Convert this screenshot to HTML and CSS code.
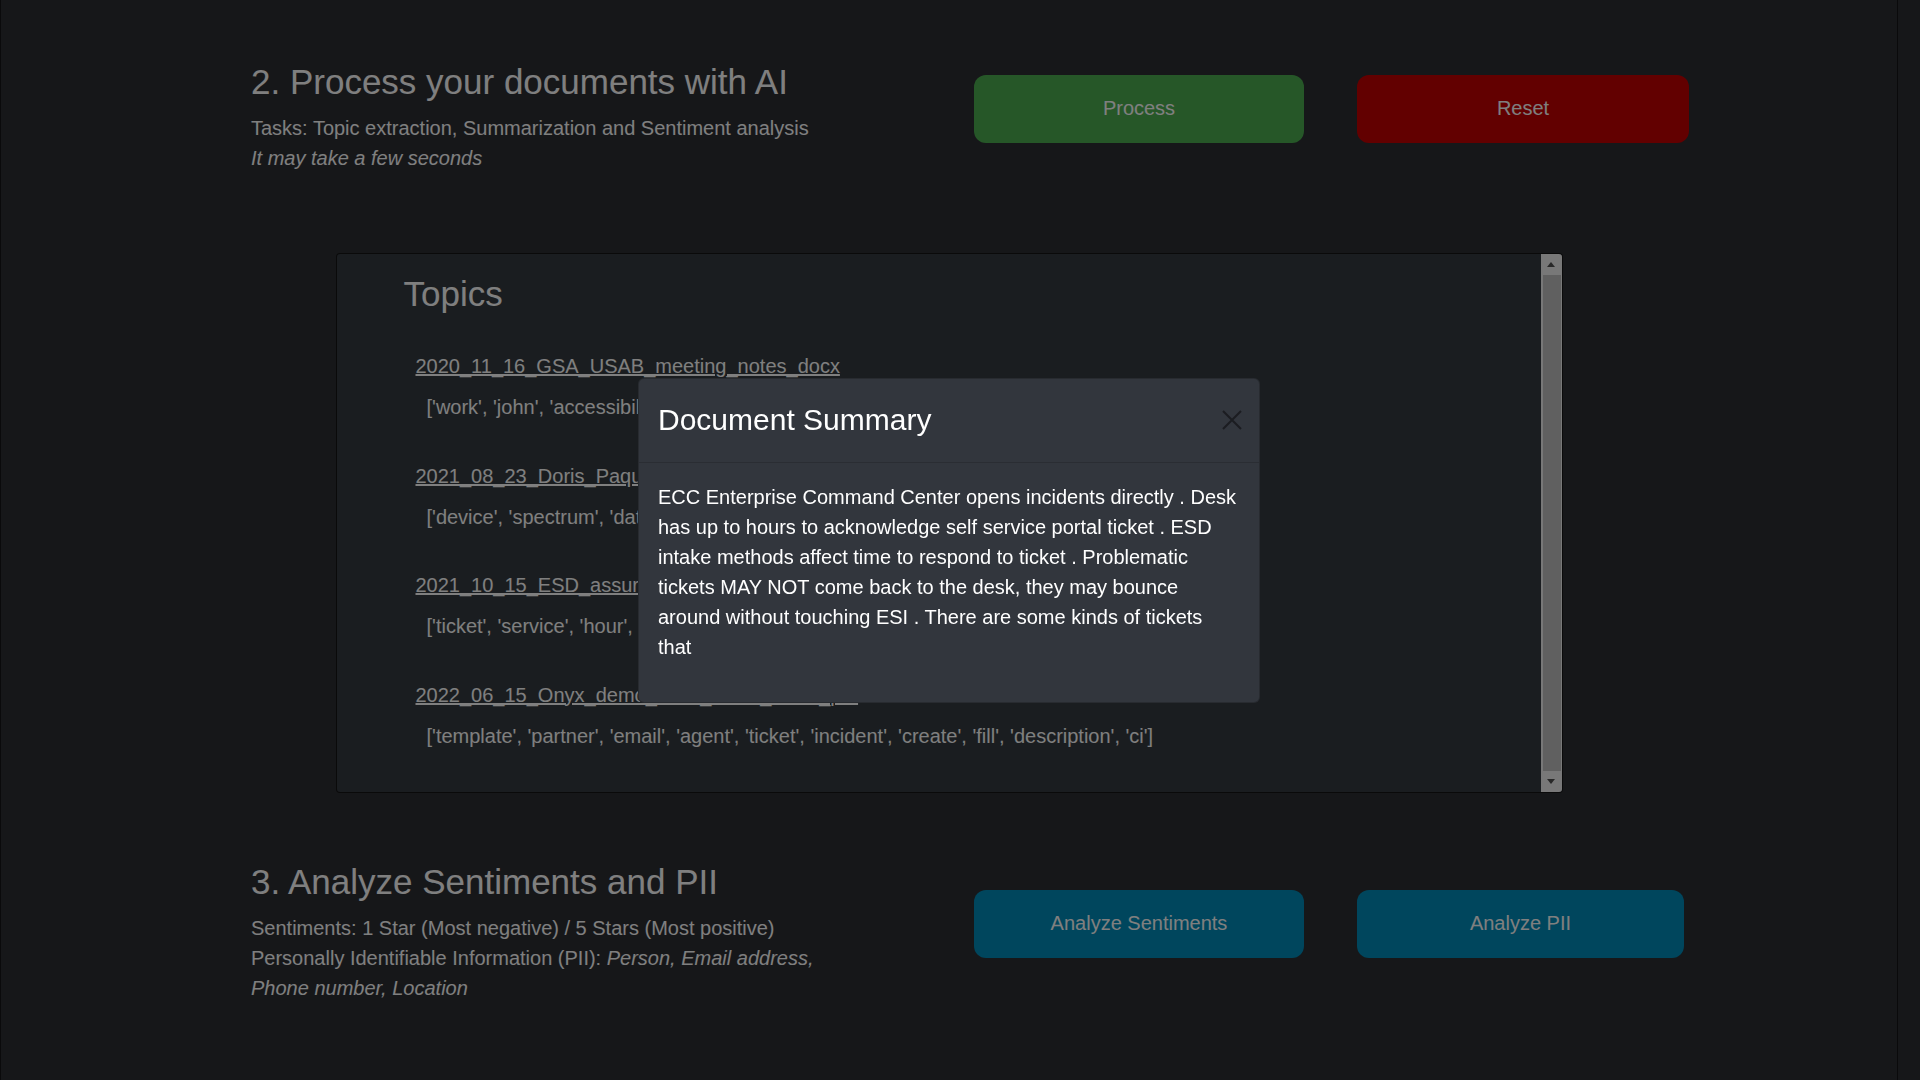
FILE: index.html
```html
<!DOCTYPE html>
<html lang="en">
<head>
<meta charset="utf-8">
<title>Document AI</title>
<link rel="stylesheet" href="styles.css">
</head>
<body>
<div class="page">
  <section class="step step-process">
    <div class="step-text">
      <h3 class="step-title">2. Process your documents with AI</h3>
      <p class="line">Tasks: Topic extraction, Summarization and Sentiment analysis</p>
      <p class="line"><em>It may take a few seconds</em></p>
    </div>
    <div class="actions">
      <button class="btn btn-green btn-process">Process</button>
      <button class="btn btn-red btn-reset">Reset</button>
    </div>
  </section>

  <div class="topics">
    <div class="topics-content">
      <h3 class="topics-title">Topics</h3>
      <div class="topic-item">
        <a class="doc-link" href="#">2020_11_16_GSA_USAB_meeting_notes_docx</a>
        <p class="topic-words">['work', 'john', 'accessibility', 'team', 'website', 'user', 'design', 'research', 'agency', 'feedback']</p>
      </div>
      <div class="topic-item">
        <a class="doc-link" href="#">2021_08_23_Doris_Paquette_interview_docx</a>
        <p class="topic-words">['device', 'spectrum', 'data', 'access', 'network', 'user', 'test', 'mobile', 'support', 'call']</p>
      </div>
      <div class="topic-item">
        <a class="doc-link" href="#">2021_10_15_ESD_assurance_review_docx</a>
        <p class="topic-words">['ticket', 'service', 'hour', 'desk', 'esd', 'incident', 'portal', 'time', 'assurance', 'queue']</p>
      </div>
      <div class="topic-item">
        <a class="doc-link" href="#">2022_06_15_Onyx_demo_ESM_notes_video_pdf</a>
        <p class="topic-words">['template', 'partner', 'email', 'agent', 'ticket', 'incident', 'create', 'fill', 'description', 'ci']</p>
      </div>
    </div>
    <div class="scrollbar">
      <div class="sb-btn"><span class="tri tri-up"></span></div>
      <div class="sb-thumb"></div>
      <div class="sb-btn"><span class="tri tri-down"></span></div>
    </div>
  </div>

  <section class="step step-analyze">
    <div class="step-text">
      <h3 class="step-title">3. Analyze Sentiments and PII</h3>
      <p class="line">Sentiments: 1 Star (Most negative) / 5 Stars (Most positive)</p>
      <p class="line">Personally Identifiable Information (PII): <em>Person, Email address, Phone number, Location</em></p>
    </div>
    <div class="actions">
      <button class="btn btn-blue btn-sent">Analyze Sentiments</button>
      <button class="btn btn-blue btn-pii">Analyze PII</button>
    </div>
  </section>
</div>

<div class="backdrop"></div>

<div class="modal">
  <div class="modal-content">
    <div class="modal-header">
      <h5 class="modal-title">Document Summary</h5>
      <button class="btn-close" aria-label="Close">
        <svg width="20" height="20" viewBox="0 0 20 20"><path d="M1 1 L19 19 M19 1 L1 19" stroke="#1b1d21" stroke-width="2" fill="none"/></svg>
      </button>
    </div>
    <div class="modal-body">
      <p>ECC Enterprise Command Center opens incidents directly . Desk has up to hours to acknowledge self service portal ticket . ESD intake methods affect time to respond to ticket . Problematic tickets MAY NOT come back to the desk, they may bounce around without touching ESI . There are some kinds of tickets that</p>
    </div>
  </div>
</div>
</body>
</html>
```

FILE: styles.css
```css
* { box-sizing: border-box; }

html, body {
  margin: 0;
  padding: 0;
}

body {
  background: #2c2e33;
  color: #ffffff;
  font-family: "Liberation Sans", Arial, sans-serif;
  font-size: 20px;
  line-height: 1.5;
  overflow: hidden;
  height: 1080px;
}

.page {
  width: 1898px;
  min-height: 1080px;
  border-left: 1px solid #141416;
  border-right: 1px solid #141416;
  padding-top: 44px;
}

.step {
  display: flex;
  align-items: center;
  padding-left: 250px;
}

.step-text {
  width: 600px;
  padding-top: 17px;
}

.step-title {
  margin: 0 0 10px 0;
  font-size: 35px;
  font-weight: 400;
  line-height: 42px;
}

.line {
  margin: 0;
  line-height: 30px;
}

.actions {
  display: flex;
  margin-left: 123px;
  gap: 53px;
}

.btn {
  height: 68px;
  border: none;
  border-radius: 12px;
  color: #ffffff;
  font-family: "Liberation Sans", Arial, sans-serif;
  font-size: 20px;
  padding: 0;
  cursor: pointer;
}

.btn-green { background: #4caf50; }
.btn-red { background: #c40000; }
.btn-blue { background: #008cba; }

.btn-process { width: 330px; }
.btn-reset { width: 332px; }
.btn-sent { width: 330px; }
.btn-pii { width: 327px; }

/* Topics panel */
.topics {
  display: flex;
  width: 1225px;
  height: 538px;
  margin: 81px auto 52px auto;
  background: #343a40;
  box-shadow: 0 0 0 1px #141414;
  border-radius: 3px;
  overflow: hidden;
}

.topics-content {
  flex: 1;
  overflow: hidden;
  padding: 19px 0 0 67px;
}

.topics-title {
  margin: 0 0 36px 0;
  font-size: 35px;
  font-weight: 400;
  line-height: 42px;
}

.topic-item {
  margin: 0 0 38.5px 12px;
}

.doc-link {
  display: inline-block;
  color: #ffffff;
  text-decoration: underline;
  line-height: 30px;
}

.topic-words {
  margin: 11px 0 0 11px;
  line-height: 30px;
  white-space: nowrap;
}

.scrollbar {
  width: 21px;
  display: flex;
  flex-direction: column;
  background: #f1f1f1;
}

.sb-btn {
  height: 21px;
  display: flex;
  align-items: center;
  justify-content: center;
}

.sb-thumb {
  flex: 1;
  margin: 0 1px 0 2px;
  background: #c1c1c1;
}

.tri {
  width: 0;
  height: 0;
  border-left: 4px solid transparent;
  border-right: 4px solid transparent;
}

.tri-up { border-bottom: 5px solid #505050; }
.tri-down { border-top: 5px solid #505050; }

/* Backdrop and modal */
.backdrop {
  position: fixed;
  inset: 0;
  background: rgba(0, 0, 0, 0.5);
}

.modal {
  position: fixed;
  top: 0;
  left: 0;
  width: 1898px;
  height: 1080px;
  display: flex;
  align-items: center;
  justify-content: center;
}

.modal-content {
  width: 622px;
  background: #32363d;
  border: 1px solid rgba(0, 0, 0, 0.2);
  border-radius: 6px;
}

.modal-header {
  display: flex;
  align-items: center;
  justify-content: space-between;
  padding: 23px 18px 24px 19px;
  border-bottom: 1px solid #2a2d33;
}

.modal-title {
  margin: 0;
  font-size: 30px;
  font-weight: 400;
  line-height: 36px;
  color: #ffffff;
}

.btn-close {
  width: 22px;
  height: 22px;
  padding: 0;
  margin: 0 -2px 0 0;
  border: none;
  background: transparent;
  display: flex;
  align-items: center;
  justify-content: center;
}

.modal-body {
  padding: 19px 21px 20px 19px;
}

.modal-body p {
  margin: 0 0 20px 0;
  line-height: 30px;
  color: #ffffff;
}
```
